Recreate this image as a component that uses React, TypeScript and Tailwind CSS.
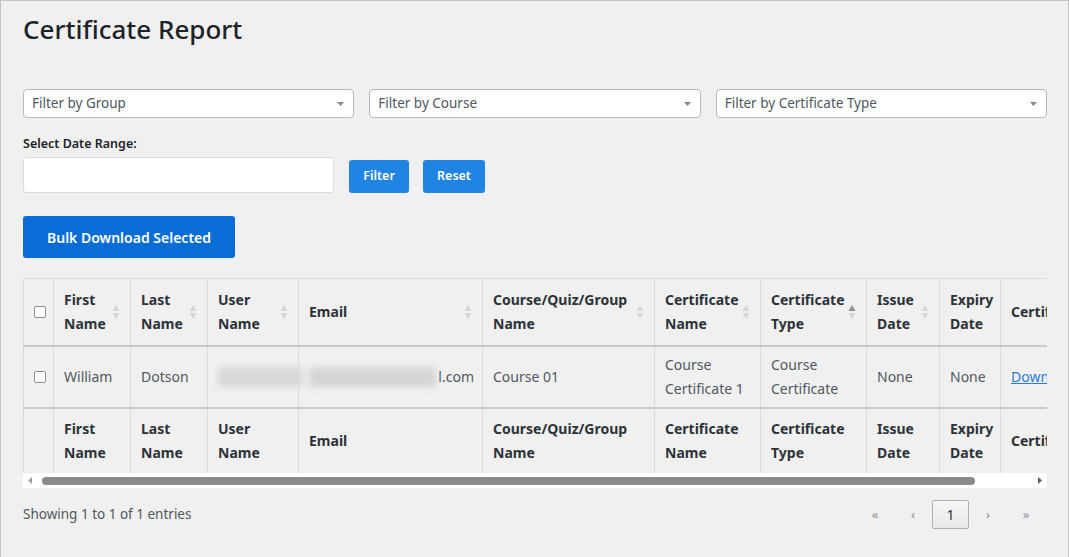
import React from "react";

const font = { fontFamily: '"Segoe UI", "Noto Sans", sans-serif' };

function SortIcon({ active }: { active?: boolean }) {
  return (
    <svg width="8" height="16" viewBox="0 0 8 16" className="shrink-0">
      <path d="M4 1 L7.5 7 H0.5 Z" fill={active ? "#8c8f94" : "#d6d6d8"} />
      <path d="M4 15 L7.5 9 H0.5 Z" fill="#d6d6d8" />
    </svg>
  );
}

function Select({ label }: { label: string }) {
  return (
    <div className="flex h-[29px] flex-1 items-center justify-between rounded-[4px] border border-[#b8b9bc] bg-white pl-[8px] pr-[9px] text-[13.5px] text-[#50575e]">
      <span>{label}</span>
      <svg width="7" height="4" viewBox="0 0 7 4">
        <path d="M0 0 H7 L3.5 4 Z" fill="#888" />
      </svg>
    </div>
  );
}

function Checkbox() {
  return <div className="h-[12px] w-[12px] rounded-[2px] border border-[#8c8f94] bg-white" />;
}

type Col = { title: [string, string?]; w: number; sort?: boolean; active?: boolean };

const cols: Col[] = [
  { title: ["First", "Name"], w: 77, sort: true },
  { title: ["Last", "Name"], w: 77, sort: true },
  { title: ["User", "Name"], w: 91, sort: true },
  { title: ["Email"], w: 184, sort: true },
  { title: ["Course/Quiz/Group", "Name"], w: 172, sort: true },
  { title: ["Certificate", "Name"], w: 106, sort: true },
  { title: ["Certificate", "Type"], w: 106, sort: true, active: true },
  { title: ["Issue", "Date"], w: 73, sort: true },
  { title: ["Expiry", "Date"], w: 61 },
  { title: ["Certificate"], w: 120 },
];

function HeadRow({ footer }: { footer?: boolean }) {
  return (
    <tr className={footer ? "h-[65px]" : "h-[67px] border-b-2 border-[#c9cacc]"}>
      <th className="border-r border-[#dcdcde] pl-[10px] text-left align-middle">
        {!footer && <Checkbox />}
      </th>
      {cols.map((c, i) => (
        <th key={i} className="border-r border-[#dcdcde] pl-[10px] pr-[10px] text-left align-middle">
          <div className="flex items-center justify-between">
            <div className="text-[14px] font-bold leading-[24px] text-[#2c3338]">
              <div>{c.title[0]}</div>
              {c.title[1] && <div>{c.title[1]}</div>}
            </div>
            {!footer && c.sort && <SortIcon active={c.active} />}
          </div>
        </th>
      ))}
    </tr>
  );
}

export default function App() {
  const td = "border-r border-[#dcdcde] pl-[10px] pr-[8px] align-middle text-[14px] leading-[24px] text-[#50575e]";
  return (
    <div style={font} className="h-[557px] w-[1069px] overflow-hidden border-x border-t border-[#c3c4c7] bg-[#f0f0f1] pl-[22px] pr-[21px]">
      <h1 className="pt-[10px] text-[26px] font-medium leading-[36px] text-[#1d2327]">Certificate Report</h1>

      <div className="mt-[42px] flex gap-[15px]">
        <Select label="Filter by Group" />
        <Select label="Filter by Course" />
        <Select label="Filter by Certificate Type" />
      </div>

      <div className="mt-[18px] text-[12.5px] font-semibold leading-[16px] text-[#1d2327]">Select Date Range:</div>
      <div className="mt-[5px] flex items-center">
        <div className="h-[36px] w-[311px] rounded-[3px] border border-[#dcdcde] bg-white" />
        <button className="ml-[15px] mt-[2px] h-[33px] w-[60px] rounded-[3px] bg-[#2085e2] text-[12.5px] font-semibold text-white">Filter</button>
        <button className="ml-[14px] mt-[2px] h-[33px] w-[62px] rounded-[3px] bg-[#2085e2] text-[12.5px] font-semibold text-white">Reset</button>
      </div>

      <button className="mt-[23px] h-[42px] w-[212px] rounded-[3px] bg-[#0a6dd5] text-[14px] font-semibold text-white">
        Bulk Download Selected
      </button>

      <div className="mt-[20px] w-[1024px] overflow-hidden border-t border-[#dcdcde]">
        <table className="w-[1097px] table-fixed border-collapse border-l border-[#dcdcde]">
          <colgroup>
            <col style={{ width: 30 }} />
            {cols.map((c, i) => (
              <col key={i} style={{ width: c.w }} />
            ))}
          </colgroup>
          <thead>
            <HeadRow />
          </thead>
          <tbody>
            <tr className="h-[62px] border-b-2 border-[#c9cacc]">
              <td className="border-r border-[#dcdcde] pl-[10px] align-middle">
                <Checkbox />
              </td>
              <td className={td}>William</td>
              <td className={td}>Dotson</td>
              <td className="border-r border-[#dcdcde] pl-[10px] align-middle">
                <div className="h-[20px] w-[85px] rounded-sm bg-[#d8d8d9] blur-[3px]" />
              </td>
              <td className={td}>
                <div className="flex items-center justify-end">
                  <div className="mr-[2px] h-[20px] w-[132px] rounded-sm bg-[#d5d5d6] blur-[3px]" />
                  <span>l.com</span>
                </div>
              </td>
              <td className={td}>Course 01</td>
              <td className={td}>Course Certificate 1</td>
              <td className={td}>Course Certificate</td>
              <td className={td}>None</td>
              <td className={td}>None</td>
              <td className={td}>
                <span className="text-[#2a7ae2] underline">Download</span>
              </td>
            </tr>
          </tbody>
          <tfoot>
            <HeadRow footer />
          </tfoot>
        </table>
        <div className="flex h-[15px] items-center bg-white">
          <svg width="14" height="15" viewBox="0 0 14 15" className="shrink-0">
            <path d="M9 4 L5 7.5 L9 11 Z" fill="#a0a0a0" />
          </svg>
          <div className="ml-[5px] h-[8px] w-[933px] rounded-full bg-[#8a8a8a]" />
          <div className="flex-1" />
          <svg width="14" height="15" viewBox="0 0 14 15" className="shrink-0">
            <path d="M5 4 L9 7.5 L5 11 Z" fill="#606060" />
          </svg>
        </div>
      </div>

      <div className="mt-[12px] flex items-center justify-between">
        <div className="text-[13.5px] text-[#50575e]">Showing 1 to 1 of 1 entries</div>
        <div className="mr-[2px] flex items-center text-[13px] text-[#8c8f94]">
          <span className="w-[38px] text-center">«</span>
          <span className="w-[38px] text-center">‹</span>
          <span className="flex h-[29px] w-[37px] items-center justify-center rounded-[2px] border border-[#b0b0b0] bg-gradient-to-b from-[#f7f7f7] to-[#e8e8e8] text-[14px] text-[#2c3338]">1</span>
          <span className="w-[38px] text-center">›</span>
          <span className="w-[38px] text-center">»</span>
        </div>
      </div>
    </div>
  );
}
